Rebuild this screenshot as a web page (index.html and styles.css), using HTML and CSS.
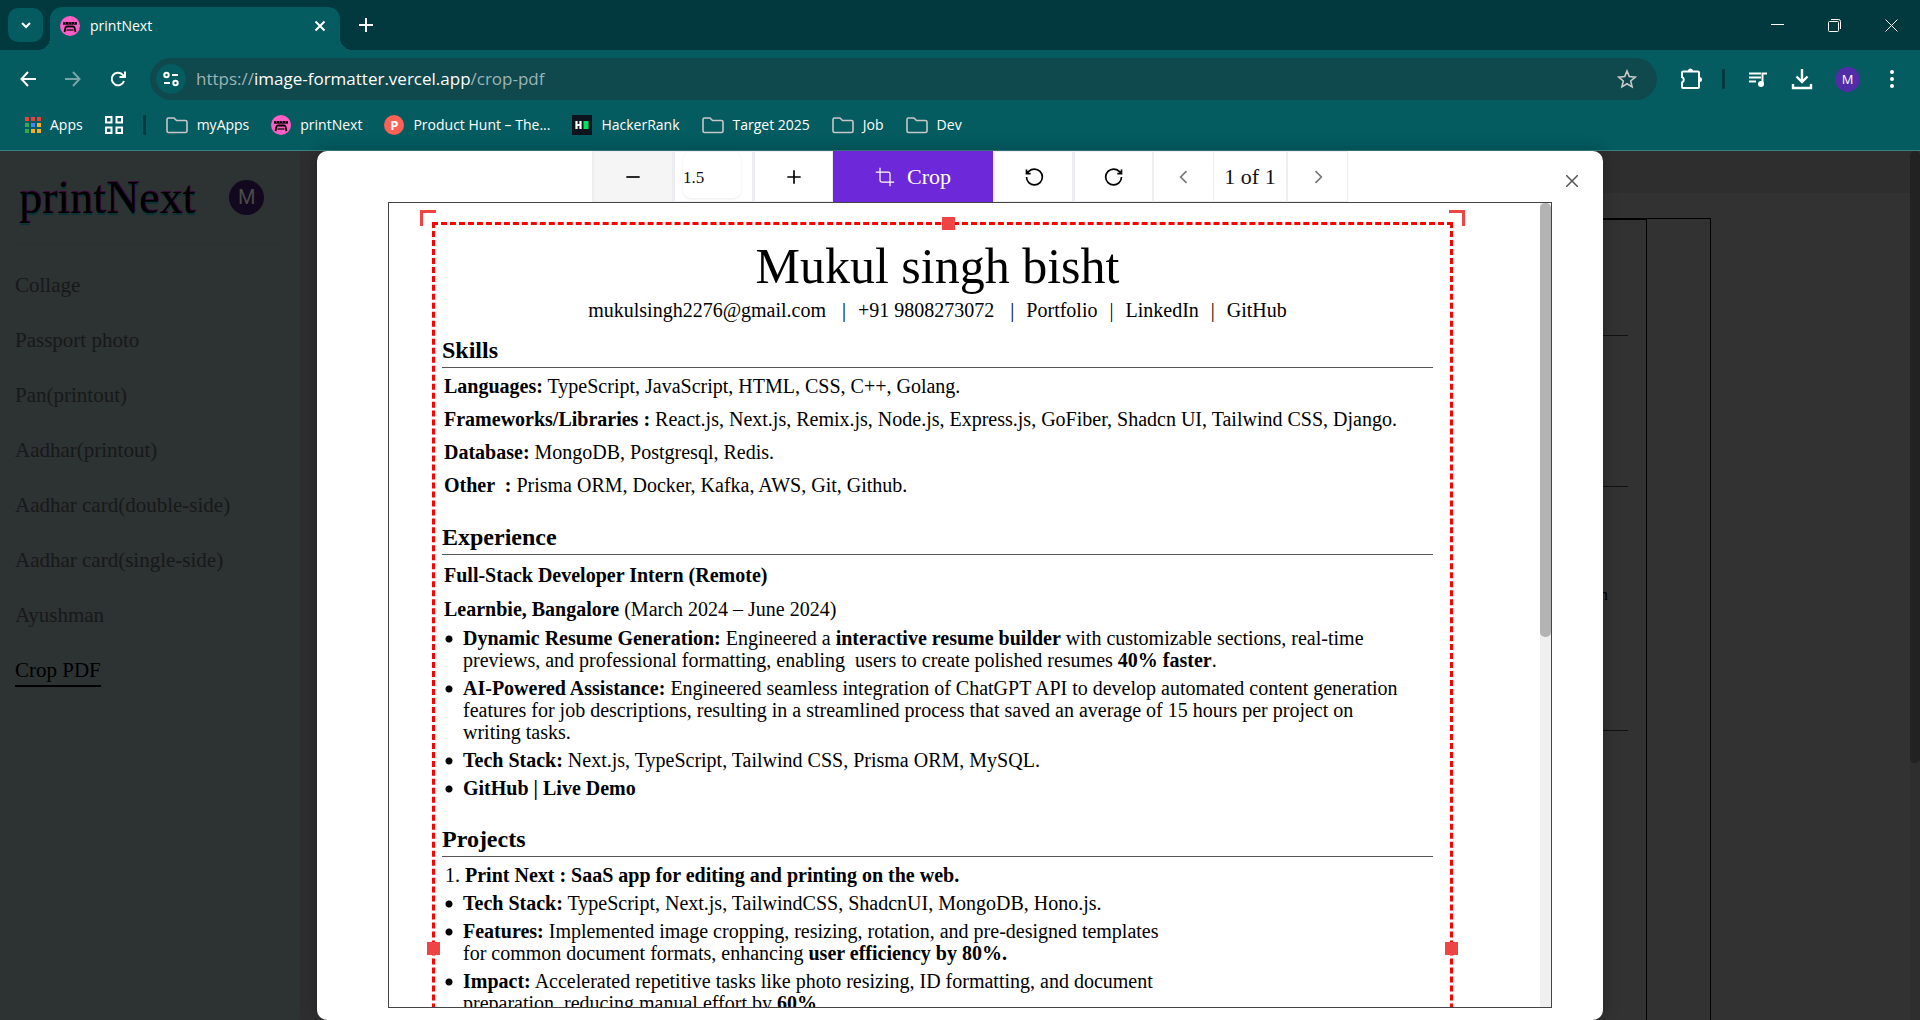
FILE: index.html
```html
<!DOCTYPE html>
<html lang="en">
<head>
<meta charset="utf-8">
<title>printNext</title>
<link rel="stylesheet" href="styles.css">
</head>
<body>
<svg class="defs" aria-hidden="true">
  <symbol id="logo" viewBox="0 0 20 20">
    <circle cx="10" cy="10" r="10" fill="#ff5ec4"/>
    <path d="M3 6h14v2.500H3z" fill="#6b1f52"/>
    <path d="M3 6.500h2v1.500h1V6h2v2h1V6.500h2V8h1V6h2v2h1V6.500h2v2H3z" fill="#000"/>
    <path d="M4.500 16l1-4.500q.4-1 1.500-1h6q1.100 0 1.500 1l1 4.500" fill="none" stroke="#000" stroke-width="1.800"/>
    <path d="M6.500 14h7" stroke="#000" stroke-width="1.200"/>
  </symbol>
  <symbol id="folder" viewBox="0 0 22 20"><path d="M1 4.500Q1 3 2.500 3H8l2.500 2.500h9Q21 5.500 21 7v9q0 1.500-1.500 1.500h-17Q1 17.500 1 16z" fill="none" stroke="#c7c7c7" stroke-width="1.600"/></symbol>
</svg>

<header class="browser">
  <div class="tabstrip">
    <button class="tab-search" aria-label="Search tabs"><svg width="12" height="12" viewBox="0 0 12 12"><path d="M2 4l4 4 4-4" class="ln2"/></svg></button>
    <div class="tab">
      <svg width="20" height="20"><use href="#logo"/></svg>
      <span class="tab-title">printNext</span>
      <button aria-label="Close tab"><svg width="12" height="12" viewBox="0 0 12 12"><path d="M1.500 1.500l9 9m0-9l-9 9" class="ln2"/></svg></button>
    </div>
    <button class="new-tab" aria-label="New tab"><svg width="14" height="14" viewBox="0 0 14 14"><path d="M7 0v14M0 7h14" class="ln2"/></svg></button>
    <div class="win">
      <button aria-label="Minimize"><svg width="13" height="13" viewBox="0 0 13 13"><path d="M0 5.500h13" class="ln1"/></svg></button>
      <button aria-label="Restore"><svg width="13" height="13" viewBox="0 0 13 13"><rect x=".5" y="2.500" width="10" height="10" rx="1" class="ln1"/><path d="M3 .5h7.500q2 0 2 2V10" class="ln1"/></svg></button>
      <button aria-label="Close"><svg width="13" height="13" viewBox="0 0 13 13"><path d="M.5.5l12 12m0-12l-12 12" class="ln1"/></svg></button>
    </div>
  </div>

  <div class="toolbar">
    <nav class="history">
      <button aria-label="Back"><svg width="16" height="16" viewBox="0 0 16 16"><path d="M8 1L1.500 8 8 15M1.500 8H16" class="ln2"/></svg></button>
      <button aria-label="Forward" class="dim"><svg width="16" height="16" viewBox="0 0 16 16"><path d="M8 1l6.500 7L8 15M14.500 8H0" class="ln2"/></svg></button>
      <button aria-label="Reload"><svg width="16" height="16" viewBox="0 0 16 16"><path d="M14 10a6.300 6.300 0 1 1-1.400-6.400L14.500 6M15 .5V6H9.500" class="ln2"/></svg></button>
    </nav>
    <div class="address">
      <button class="site" aria-label="Site information"><svg width="16" height="16" viewBox="0 0 16 16"><g class="ln2"><circle cx="3.500" cy="4" r="2.200"/><path d="M9 4h6M1 12h6"/><circle cx="12.500" cy="12" r="2.200"/></g></svg></button>
      <p class="url">https://<b>image-formatter.vercel.app</b>/crop-pdf</p>
      <button aria-label="Bookmark"><svg width="20" height="20" viewBox="0 0 20 20"><path d="M10 2l2.300 5.600 6 .5-4.600 3.900 1.400 5.900L10 14.800 4.900 17.900 6.300 12 1.700 8.100l6-.5z" fill="none" stroke="#c9c9c9" stroke-width="1.600"/></svg></button>
    </div>
    <div class="actions">
      <button aria-label="Extensions"><svg width="24" height="24" viewBox="0 0 24 24"><path d="M4 5.500q0-1 1-1h15q1 0 1 1V20q0 1-1 1H5q-1 0-1-1v-4.500a3 3 0 0 0 0-5.500z" transform="translate(-1 0)" class="ln2"/><path d="M9 4a2.500 2.500 0 0 1 5 0zM20.500 10a2.500 2.500 0 0 1 0 5z" fill="#fff"/></svg></button>
      <span class="sep"></span>
      <button aria-label="Media"><svg width="22" height="22" viewBox="0 0 22 22"><path d="M2 5.500h12M2 9.500h12M2 13.500h7" class="ln2"/><path d="M15.500 16V5.500H20" class="ln2"/><circle cx="14" cy="16" r="3" fill="#fff"/></svg></button>
      <button aria-label="Downloads"><svg width="22" height="22" viewBox="0 0 22 22"><path d="M11 1v13M5.500 8.500L11 14l5.500-5.500M2 16v4h18v-4" fill="none" stroke="#fff" stroke-width="2.400"/></svg></button>
      <button class="me" aria-label="Profile">M</button>
      <button class="dots" aria-label="Menu"><svg width="6" height="20" viewBox="0 0 6 20"><g fill="#fff"><circle cx="3" cy="3" r="2"/><circle cx="3" cy="10" r="2"/><circle cx="3" cy="17" r="2"/></g></svg></button>
    </div>
  </div>

  <nav class="bookmarks">
    <a href="#"><svg width="16" height="18" viewBox="0 0 16 18"><g fill="#ea4335"><path d="M0 1h4v4H0zM6 1h4v4H6zM12 1h4v4h-4z"/></g><path d="M0 7h4v4H0zM0 13h4v4H0z" fill="#34a853"/><path d="M6 7h4v4H6z" fill="#4285f4"/><path d="M12 7h4v4h-4zM6 13h4v4H6zM12 13h4v4h-4z" fill="#fbae17"/></svg>Apps</a>
    <a href="#" aria-label="Tab groups"><svg width="18" height="18" viewBox="0 0 18 18"><path d="M1 1h5.500v5.500H1zM11.500 1H17v5.500h-5.500zM1 11.500h5.500V17H1zM11.500 11.500H17V17h-5.500z" class="ln2"/></svg></a>
    <span class="sep"></span>
    <a href="#"><svg width="22" height="20"><use href="#folder"/></svg>myApps</a>
    <a href="#"><svg width="20" height="20"><use href="#logo"/></svg>printNext</a>
    <a href="#"><span class="ph">P</span>Product Hunt – The...</a>
    <a href="#"><svg width="20" height="20" viewBox="0 0 20 20"><path d="M0 0h20v20H0z" fill="#0e141e"/><path d="M4.500 6v8M8.500 6v8M4.500 10h4" stroke="#fff" stroke-width="2.200"/><path d="M11.500 6h5v8h-5z" fill="#00e35f"/></svg>HackerRank</a>
    <a href="#"><svg width="22" height="20"><use href="#folder"/></svg>Target 2025</a>
    <a href="#"><svg width="22" height="20"><use href="#folder"/></svg>Job</a>
    <a href="#"><svg width="22" height="20"><use href="#folder"/></svg>Dev</a>
  </nav>
</header>

<div class="app">
  <aside class="sidebar">
    <div class="brand"><span class="wordmark">printNext</span><span class="avatar">M</span></div>
    <nav class="menu">
      <a href="#">Collage</a>
      <a href="#">Passport photo</a>
      <a href="#">Pan(printout)</a>
      <a href="#">Aadhar(printout)</a>
      <a href="#">Aadhar card(double-side)</a>
      <a href="#">Aadhar card(single-side)</a>
      <a href="#">Ayushman</a>
      <a href="#" class="active">Crop PDF</a>
    </nav>
  </aside>

  <main class="workspace">
    <div class="strip"></div>
    <div class="sheet"><div class="sheet-page">
      <hr><hr><p>n</p><hr>
    </div></div>
  </main>
  <div class="page-scroll"><i></i></div>

  <div class="overlay">
    <section class="modal" role="dialog" aria-label="Crop PDF">
      <button class="close" aria-label="Close"><svg width="12" height="12" viewBox="0 0 12 12"><path d="M0 0l12 12m0-12L0 12" stroke="#555" stroke-width="1.500"/></svg></button>
      <div class="tools">
        <button class="soft" aria-label="Zoom out"><svg class="ic" viewBox="0 0 24 24"><path d="M4 12h16"/></svg></button>
        <label class="zoom"><input type="text" value="1.5" aria-label="Zoom level"></label>
        <button aria-label="Zoom in"><svg class="ic" viewBox="0 0 24 24"><path d="M4 12h16M12 4v16"/></svg></button>
        <button class="crop"><svg class="ic thin" viewBox="0 0 24 24"><path d="M6 1v15a2 2 0 0 0 2 2h15M1 6h15a2 2 0 0 1 2 2v15"/></svg>Crop</button>
        <button aria-label="Rotate left"><svg class="ic" viewBox="0 0 24 24"><path d="M3 12a9.500 9.500 0 1 0 9.500-9.500 9.800 9.800 0 0 0-6.800 2.700L3 8M3 3v5h5"/></svg></button>
        <button aria-label="Rotate right"><svg class="ic" viewBox="0 0 24 24"><path d="M21 12a9.500 9.500 0 1 1-9.500-9.500c2.600 0 5 1 6.800 2.700L21 8M21 3v5h-5"/></svg></button>
        <button class="pg" aria-label="Previous page"><svg class="ic" viewBox="0 0 24 24"><path d="M15 5l-7 7 7 7"/></svg></button>
        <span class="count">1 of 1</span>
        <button class="pg" aria-label="Next page"><svg class="ic" viewBox="0 0 24 24"><path d="M9 5l7 7-7 7"/></svg></button>
      </div>

      <div class="viewer">
        <article class="resume">
          <h1>Mukul singh bisht</h1>
          <p class="contact"><span>mukulsingh2276@gmail.com</span><span class="wide">|</span><span>+91 9808273072</span><span class="wide">|</span><span>Portfolio</span><span>|</span><span>LinkedIn</span><span>|</span><span>GitHub</span></p>

          <h2>Skills</h2>
          <div class="skills">
            <p><b>Languages:</b> TypeScript, JavaScript, HTML, CSS, C++, Golang.</p>
            <p><b>Frameworks/Libraries :</b> React.js, Next.js, Remix.js, Node.js, Express.js, GoFiber, Shadcn UI, Tailwind CSS, Django.</p>
            <p><b>Database:</b> MongoDB, Postgresql, Redis.</p>
            <p><b>Other &nbsp;:</b> Prisma ORM, Docker, Kafka, AWS, Git, Github.</p>
          </div>

          <h2 class="exp">Experience</h2>
          <div class="job">
            <p><b>Full-Stack Developer Intern (Remote)</b></p>
            <p><b>Learnbie, Bangalore</b> (March 2024 – June 2024)</p>
          </div>
          <ul>
            <li><b>Dynamic Resume Generation:</b> Engineered a <b>interactive resume builder</b> with customizable sections, real-time<br>previews, and professional formatting, enabling&nbsp; users to create polished resumes <b>40% faster</b>.</li>
            <li><b>AI-Powered Assistance:</b> Engineered seamless integration of ChatGPT API to develop automated content generation<br>features for job descriptions, resulting in a streamlined process that saved an average of 15 hours per project on<br>writing tasks.</li>
            <li><b>Tech Stack:</b> Next.js, TypeScript, Tailwind CSS, Prisma ORM, MySQL.</li>
            <li><b>GitHub | Live Demo</b></li>
          </ul>

          <h2 class="proj">Projects</h2>
          <p class="project">1. <b>Print Next : SaaS app for editing and printing on the web.</b></p>
          <ul>
            <li><b>Tech Stack:</b> TypeScript, Next.js, TailwindCSS, ShadcnUI, MongoDB, Hono.js.</li>
            <li><b>Features:</b> Implemented image cropping, resizing, rotation, and pre-designed templates<br>for common document formats, enhancing <b>user efficiency by 80%.</b></li>
            <li><b>Impact:</b> Accelerated repetitive tasks like photo resizing, ID formatting, and document<br>preparation, reducing manual effort by <b>60%</b>.</li>
          </ul>
        </article>
        <div class="cropbox">
          <i class="corner tl"></i><i class="corner tr"></i>
          <i class="handle top"></i><i class="handle left"></i><i class="handle right"></i>
        </div>
        <div class="scroll"><i></i></div>
      </div>
    </section>
  </div>
</div>
</body>
</html>
```
FILE: styles.css
```css
* { box-sizing: border-box; margin: 0; padding: 0; }
html, body { height: 100%; }
body {
  display: flex; flex-direction: column; overflow: hidden;
  font-family: "Liberation Serif", serif; background: #323232;
}
button { border: 0; background: none; color: inherit; font: inherit; display: flex; align-items: center; justify-content: center; }
a { color: inherit; text-decoration: none; }
svg { display: block; flex: none; }
.defs { width: 0; height: 0; position: absolute; }
.ln1, .ln2 { fill: none; stroke: #fff; }
.ln1 { stroke-width: 1; }
.ln2 { stroke-width: 2; }

/* Browser frame */
.browser {
  flex: none; background: #045b60; color: #fff;
  font: 14px/20px "Open Sans", "Noto Sans", sans-serif;
  border-bottom: 1px solid #3a8186;
}
.tabstrip { display: flex; align-items: center; height: 50px; background: #02393e; padding-left: 8px; }
.tab-search { width: 35px; height: 34px; border-radius: 10px; background: #045b60; }
.tab {
  align-self: flex-end; display: flex; align-items: center; gap: 10px;
  width: 290px; height: 43px; margin-left: 7px; padding: 0 14px 6px 10px;
  background: #045b60; border-radius: 12px 12px 0 0; position: relative;
}
.tab::before, .tab::after {
  content: ""; position: absolute; bottom: 0; width: 12px; height: 12px;
}
.tab::before { left: -12px; background: radial-gradient(circle at 0 0, transparent 12px, #045b60 12px); }
.tab::after { right: -12px; background: radial-gradient(circle at 100% 0, transparent 12px, #045b60 12px); }
.tab-title { flex: 1; }
.new-tab { width: 30px; height: 30px; margin-left: 11px; }
.win { display: flex; margin-left: auto; }
.win button { width: 57px; height: 48px; }
.toolbar { display: flex; align-items: center; height: 58px; padding: 0 25px 0 0; }
.history { display: flex; width: 150px; padding-left: 8px; }
.history button { width: 40px; height: 36px; margin-right: 5px; }
.dim { opacity: .45; }
.address {
  flex: 1; display: flex; align-items: center; height: 42px;
  background: #0f484d; border-radius: 21px; padding: 0 20px 0 6px;
}
.site { width: 30px; height: 30px; border-radius: 15px; background: #045b60; }
.url { flex: 1; margin-left: 10px; font-size: 17px; line-height: 24px; color: #9db4b7; }
.url b { font-weight: 400; color: #fff; }
.actions { display: flex; align-items: center; gap: 22px; padding-left: 22px; }
.sep { width: 3px; height: 20px; background: #02393e; border-radius: 1px; }
.actions .sep { margin-left: -3px; }
.actions .dots { margin-left: 7px; }
.me { width: 25px; height: 25px; border-radius: 50%; background: #512da8; font-size: 13px; }
.bookmarks { display: flex; align-items: center; gap: 22px; height: 42px; padding: 0 0 8px 25px; }
.bookmarks a { display: flex; align-items: center; gap: 9px; }
.bookmarks .sep { margin: 0 -2px; }
.ph { width: 20px; height: 20px; border-radius: 50%; background: #ff6154; font-weight: 700; font-size: 13px; line-height: 20px; text-align: center; }

/* Dimmed application behind the dialog */
.app { flex: 1; min-height: 0; display: flex; position: relative; }
.sidebar { width: 300px; background: #2d3232; padding: 16px 15px; }
.brand { display: flex; align-items: center; gap: 34px; height: 78px; padding: 0 0 16px 4px; border-bottom: 1px solid #2b3030; }
.wordmark { font-size: 46px; line-height: 54px; color: #000; text-shadow: 1px -1px 0 #3c0a3c, 0 2px 0 #053438; }
.avatar { width: 35px; height: 35px; border-radius: 50%; background: #12081f; color: #4a4a4a; font: 20px/35px Roboto, sans-serif; text-align: center; }
.menu { display: flex; flex-direction: column; align-items: flex-start; gap: 23px; margin-top: 25px; font-size: 21px; line-height: 30px; color: #171919; }
.menu a { border-bottom: 2px solid transparent; }
.menu .active { color: #000; border-color: #000; }
.workspace { flex: 1; min-width: 0; overflow: hidden; border-left: 17px solid #2e2e30; }
.strip { height: 42px; background: #2e2e2e; }
.sheet { max-width: 1212px; height: 1600px; margin: 25px 199px 0 auto; border: 1px solid #000; padding: 0 63px 0 0; }
.sheet-page { height: 100%; border: 1px solid #000; padding: 115px 18px 0; text-align: right; }
.sheet-page hr { border: 0; border-top: 1px solid #111; margin-bottom: 150px; }
.sheet-page hr + hr { margin-bottom: 98px; }
.sheet-page p { font-size: 17px; line-height: 20px; padding-right: 20px; margin-bottom: 125px; color: #000; }
.page-scroll { width: 10px; background: #2e2e2e; }
.page-scroll i { display: block; height: 612px; background: #222; border-radius: 5px; }

/* Crop dialog */
.overlay { position: absolute; inset: 0; display: flex; justify-content: center; }
.modal {
  position: relative; display: flex; flex-direction: column;
  width: 100%; max-width: 1286px; padding: 0 51px 12px 71px;
  background: #fff; border-radius: 10px; box-shadow: 0 0 16px rgba(0, 0, 0, .25);
}
.close { position: absolute; top: 20px; right: 21px; width: 20px; height: 20px; }
.tools { display: flex; justify-content: center; height: 51px; }
.tools > * { width: 80px; border: 2px solid #edeef1; border-width: 1px 1px 1px 2px; }
.tools .soft { width: 81px; background: #f5f5f5; }
.zoom { padding: 0 8px; }
.zoom input {
  width: 58px; height: 46px; border: 0; border-radius: 8px; padding: 6px 0 0;
  font: 17px/20px "Liberation Serif", serif; color: #111; box-shadow: 0 1px 3px rgba(0, 0, 0, .08);
}
.tools .crop { width: 160px; gap: 12px; background: #6d28d9; border: 0; color: #fff; font-size: 22px; }
.ic { width: 20px; height: 20px; fill: none; stroke: currentColor; stroke-width: 2; }
.ic.thin { stroke-width: 1.5; }
.tools .pg { width: 61px; color: #777; border-left-width: 1px; }
.tools .count { width: 73px; border-left: 0; font-size: 22px; line-height: 50px; text-align: center; color: #111; }
.viewer { flex: 1; min-height: 0; position: relative; overflow: hidden; border: 1px solid #444; }
.scroll { position: absolute; top: 0; right: 0; bottom: 0; width: 11px; background: #efefef; }
.scroll i { display: block; height: 434px; background: #b3b3b3; border-radius: 5px; }
.cropbox { position: absolute; top: 19px; left: 43px; right: 98px; height: 1452px; border: 3px dashed #f00; }
.corner { position: absolute; top: -15px; width: 16px; height: 16px; border: 3px solid #ef4444; border-bottom: 0; }
.tl { left: -15px; border-right: 0; }
.tr { right: -15px; border-left: 0; }
.handle { position: absolute; width: 13px; height: 13px; background: #ef4444; }
.top { top: -8px; left: 50%; margin-left: -1px; }
.left { left: -8px; top: 50%; margin-top: -6px; }
.right { right: -8px; top: 50%; margin-top: -6px; }

/* Résumé page */
.resume { padding: 33px 118px 0 53px; font-size: 20px; line-height: 22px; color: #000; white-space: nowrap; }
.resume h1 { font-size: 50px; line-height: 60px; font-weight: 400; text-align: center; }
.contact { display: flex; justify-content: center; gap: 12px; line-height: 28px; }
.contact .wide { margin-left: 4px; }
.resume h2 { margin-top: 12px; padding-bottom: 3px; font-size: 24px; line-height: 28px; border-bottom: 1px solid #555; }
.resume .exp { margin-top: 21px; }
.resume .proj { margin-top: 26px; }
.skills { padding: 2px 0 0 2px; line-height: 33px; }
.job { padding: 3px 0 1px 2px; line-height: 34px; }
.resume ul { display: flex; flex-direction: column; gap: 6px; list-style: none; }
.resume li { padding-left: 21px; background: radial-gradient(circle at 7px 12px, #000 3px, transparent 4px); }
.project { padding: 4px 0 3px 3px; line-height: 28px; }
```
